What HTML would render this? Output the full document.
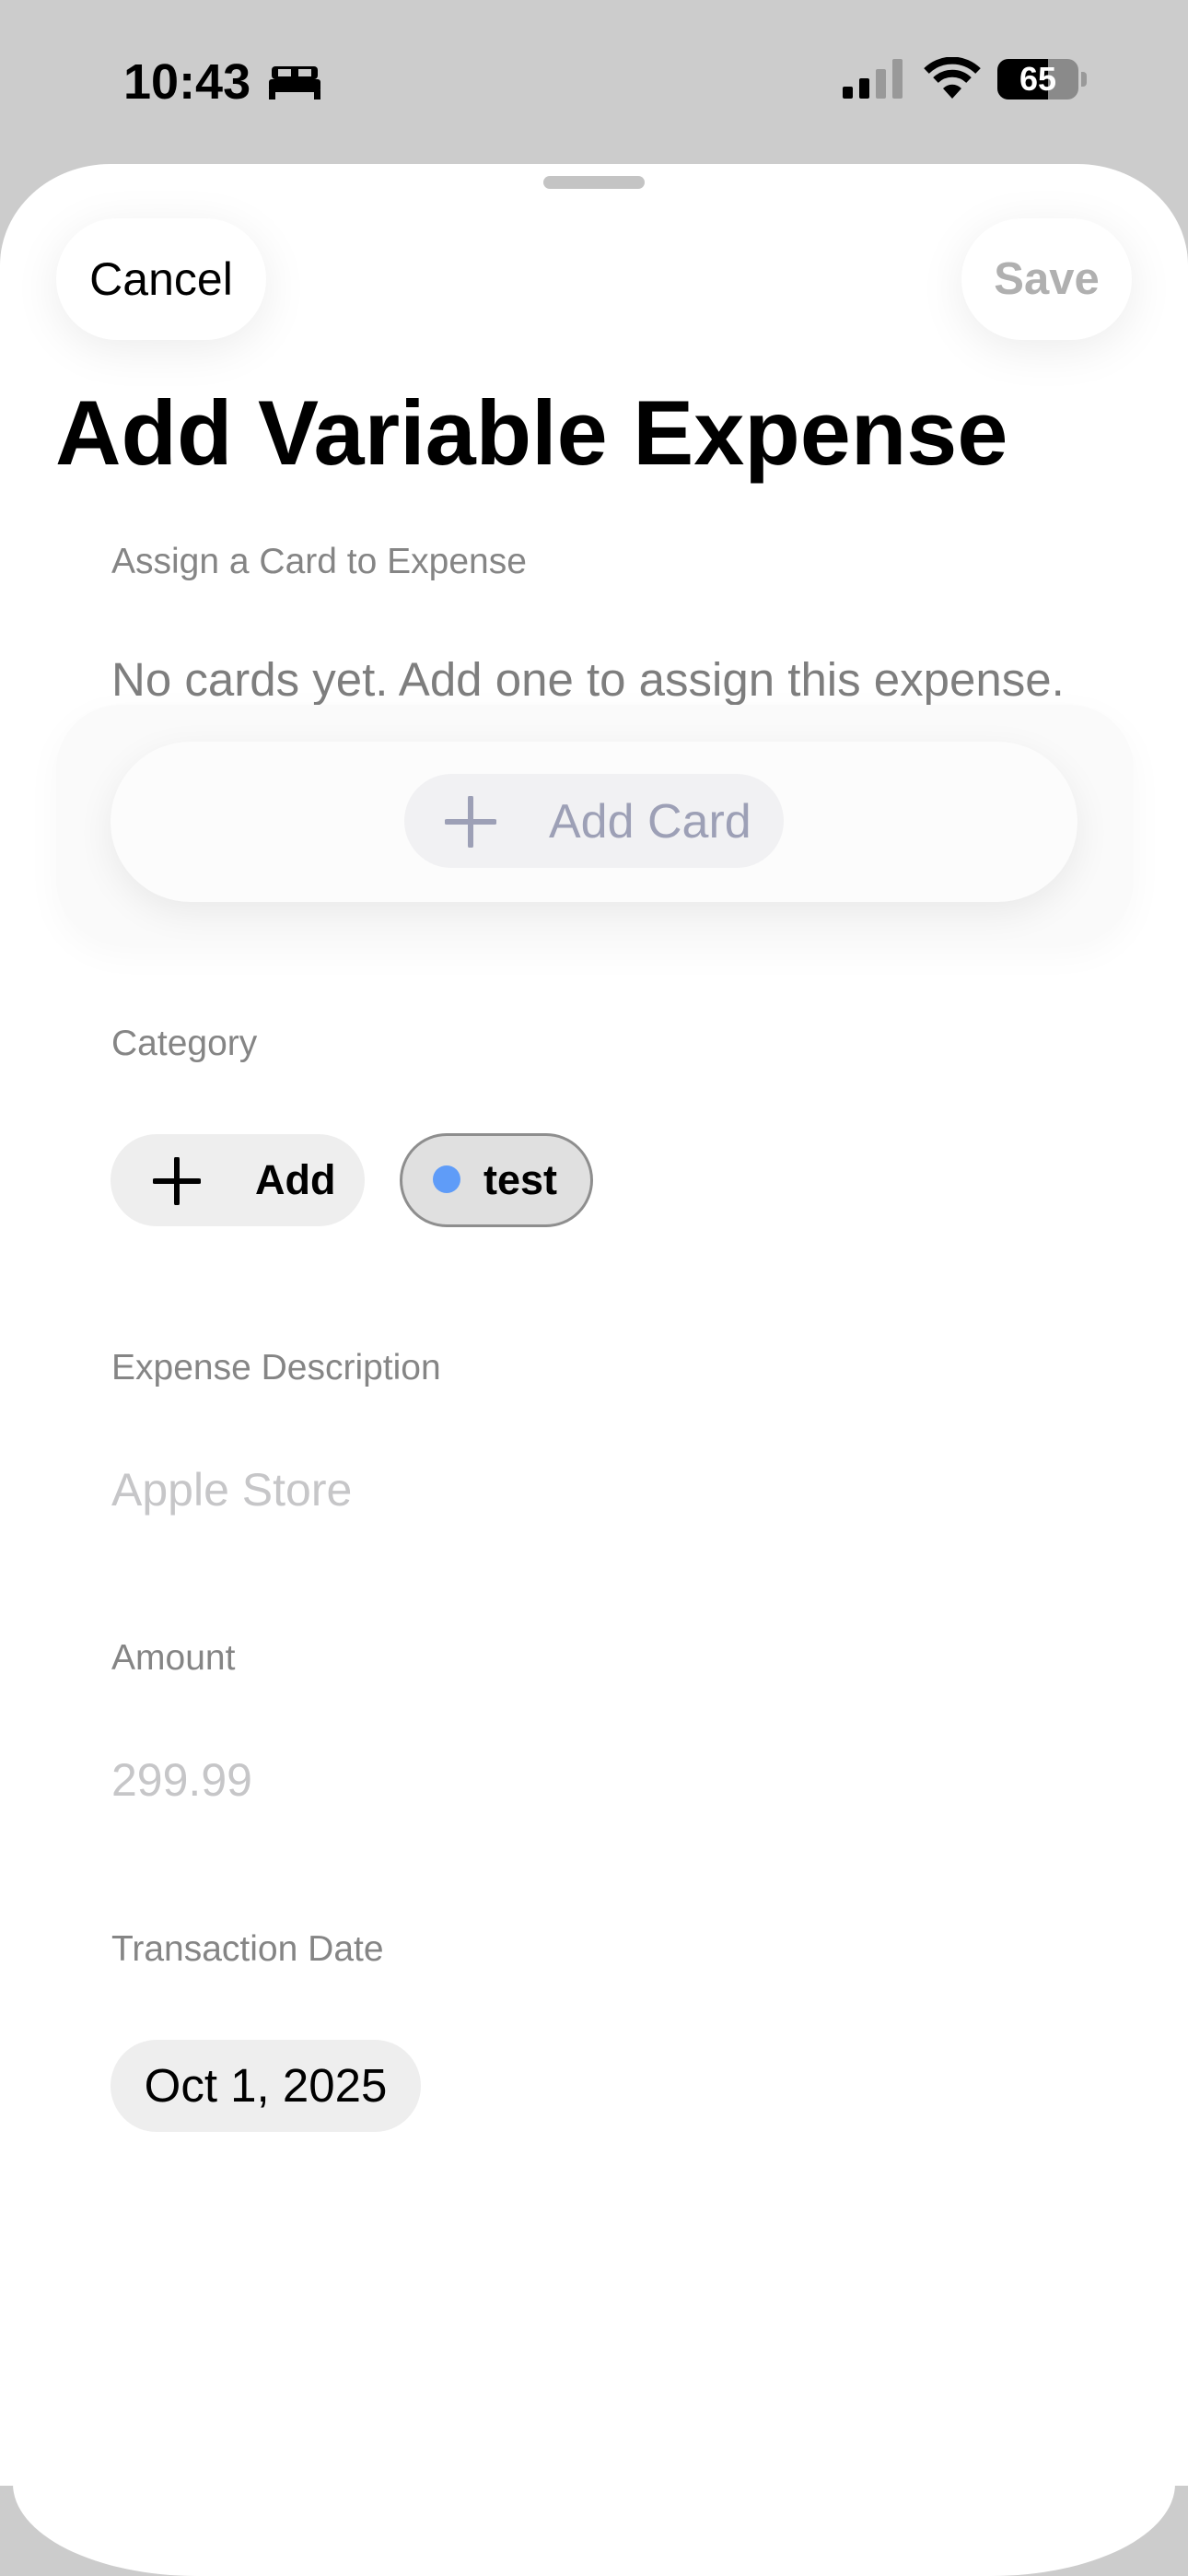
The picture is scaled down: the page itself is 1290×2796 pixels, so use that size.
<!DOCTYPE html>
<html><head><meta charset="utf-8"><style>
*{margin:0;padding:0;box-sizing:border-box}
body{width:1290px;height:2796px;background:#cccccc;position:relative;overflow:hidden;font-family:"Liberation Sans",sans-serif}
.abs{position:absolute}
.sheet{left:0;top:178px;width:1290px;height:2520px;background:#fff;border-radius:120px 120px 0 0/110px 110px 0 0}
.sheetb{left:14px;top:2690px;width:1262px;height:106px;background:#fff;border-radius:0 0 200px 200px/0 0 100px 100px}
.lbl{left:121px;font-size:39px;color:#858585;line-height:1}
.ph{left:121px;font-size:50px;color:#c6c6c8;line-height:1}
</style></head><body>
<div class="abs" style="left:134px;top:58px;font-size:54px;font-weight:bold;color:#000;letter-spacing:0px">10:43</div>
<svg class="abs" style="left:292px;top:70px" width="56" height="40" viewBox="0 0 56 40"><rect x="3" y="2" width="50" height="14" rx="4" fill="#000"/><rect x="10" y="5" width="14" height="8" fill="#ccc"/><rect x="32" y="5" width="14" height="8" fill="#ccc"/><rect x="0" y="16" width="56" height="14" rx="3" fill="#000"/><rect x="0" y="28" width="7" height="10" fill="#000"/><rect x="49" y="28" width="7" height="10" fill="#000"/></svg>
<svg class="abs" style="left:915px;top:64px" width="66" height="44"><rect x="0" y="30" width="11" height="13" rx="2" fill="#000"/><rect x="18" y="21" width="11" height="22" rx="2" fill="#000"/><rect x="36" y="11" width="11" height="32" rx="2" fill="#999"/><rect x="54" y="0" width="11" height="43" rx="2" fill="#999"/></svg>
<svg class="abs" style="left:1003px;top:62px" width="62" height="46" viewBox="0 0 62 46"><path d="M3 15 A40 40 0 0 1 59 15" stroke="#000" stroke-width="8" fill="none"/><path d="M13 25 A26 26 0 0 1 49 25" stroke="#000" stroke-width="8" fill="none"/><path d="M31 45 L21 34 A14 14 0 0 1 41 34 Z" fill="#000"/></svg>
<div class="abs" style="left:1083px;top:64px;width:88px;height:44px;border-radius:12px;background:#8a8a8a;overflow:hidden"><div style="width:55px;height:44px;background:#000"></div></div>
<div class="abs" style="left:1174px;top:78px;width:6px;height:16px;border-radius:0 4px 4px 0;background:#999"></div>
<div class="abs" style="left:1083px;top:64px;width:88px;height:44px;font-size:36px;font-weight:bold;color:#fff;text-align:center;line-height:44px">65</div>

<div class="abs sheet"></div>
<div class="abs sheetb"></div>
<div class="abs" style="left:590px;top:191px;width:110px;height:14px;border-radius:7px;background:#c4c4c4"></div>

<div class="abs" style="left:61px;top:237px;width:228px;height:132px;border-radius:66px;background:#fff;box-shadow:0 10px 50px rgba(0,0,0,0.08);font-size:50px;line-height:132px;text-align:center;color:#000">Cancel</div>
<div class="abs" style="left:1044px;top:237px;width:185px;height:132px;border-radius:66px;background:#fff;box-shadow:0 10px 50px rgba(0,0,0,0.08);font-size:49px;line-height:132px;text-align:center;color:#b0b0b0;font-weight:bold">Save</div>

<div class="abs" style="left:60px;top:420px;font-size:99px;font-weight:bold;color:#000;line-height:1">Add Variable Expense</div>

<div class="abs lbl" style="top:590px">Assign a Card to Expense</div>
<div class="abs" style="left:121px;top:712px;font-size:51px;color:#7e7e7e;line-height:1">No cards yet. Add one to assign this expense.</div>
<div class="abs" style="left:61px;top:765px;width:1170px;height:260px;border-radius:70px;background:#fafafa;box-shadow:0 10px 40px rgba(0,0,0,0.03)"></div>
<div class="abs" style="left:120px;top:805px;width:1050px;height:174px;border-radius:87px;background:#fcfcfc;box-shadow:0 12px 40px rgba(0,0,0,0.07)"></div>
<div class="abs" style="left:439px;top:840px;width:412px;height:102px;border-radius:51px;background:#f1f1f3"></div>
<svg class="abs" style="left:483px;top:864px" width="56" height="56"><path d="M28 2V54M2 28H54" stroke="#9da0b6" stroke-width="6" stroke-linecap="round"/></svg>
<div class="abs" style="left:596px;top:866px;font-size:52px;color:#9da0b6;line-height:1">Add Card</div>

<div class="abs lbl" style="top:1113px">Category</div>
<div class="abs" style="left:120px;top:1231px;width:276px;height:100px;border-radius:50px;background:#eeeeee"></div>
<svg class="abs" style="left:166px;top:1256px" width="52" height="52"><path d="M26 2V50M2 26H50" stroke="#000" stroke-width="6" stroke-linecap="round"/></svg>
<div class="abs" style="left:277px;top:1258px;font-size:45px;color:#000;line-height:1;font-weight:bold">Add</div>
<div class="abs" style="left:434px;top:1230px;width:210px;height:102px;border-radius:51px;background:#e0e0e0;border:3px solid #8e8e8e"></div>
<div class="abs" style="left:470px;top:1265px;width:30px;height:30px;border-radius:50%;background:#5f9cf8"></div>
<div class="abs" style="left:525px;top:1258px;font-size:45px;color:#000;font-weight:bold;line-height:1">test</div>

<div class="abs lbl" style="top:1465px">Expense Description</div>
<div class="abs ph" style="top:1592px">Apple Store</div>
<div class="abs lbl" style="top:1780px">Amount</div>
<div class="abs ph" style="top:1907px">299.99</div>
<div class="abs lbl" style="top:2096px">Transaction Date</div>
<div class="abs" style="left:120px;top:2214px;width:337px;height:100px;border-radius:50px;background:#eeeeee;font-size:51px;line-height:100px;text-align:center;color:#000">Oct 1, 2025</div>
</body></html>
